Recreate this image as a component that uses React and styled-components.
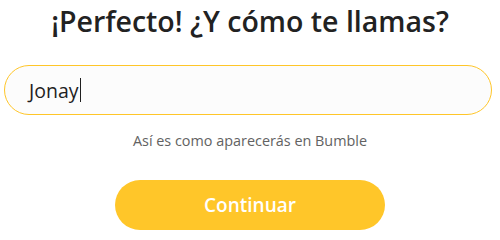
import React from "react";
import styled, { createGlobalStyle } from "styled-components";

const Global = createGlobalStyle`
  html, body { margin: 0; padding: 0; background: #ffffff; }
  body { font-family: "Open Sans", "Noto Sans", sans-serif; }
`;

const Page = styled.div`
  width: 500px;
  height: 238px;
  display: flex;
  flex-direction: column;
  align-items: center;
  box-sizing: border-box;
  padding-top: 1px;
`;

const Title = styled.h1`
  margin: 0;
  font-family: "Open Sans", sans-serif;
  font-weight: 600;
  font-size: 28.5px;
  line-height: 40px;
  color: #222222;
  letter-spacing: 0;
`;

const Field = styled.div`
  margin-top: 24px;
  align-self: flex-start;
  margin-left: 4px;
  width: 488px;
  height: 50px;
  box-sizing: border-box;
  border: 1.5px solid #ffc629;
  border-radius: 25px;
  background: #fcfcfc;
  display: flex;
  align-items: center;
  padding-left: 24px;
`;

const Value = styled.span`
  font-family: "Open Sans", sans-serif;
  font-size: 19.5px;
  color: #1f1f1f;
`;

const Caret = styled.span`
  display: inline-block;
  width: 1px;
  height: 24px;
  background: #1f1f1f;
  margin-left: 1px;
  vertical-align: middle;
`;

const Hint = styled.p`
  margin: 16px 0 0;
  font-family: "Open Sans", sans-serif;
  font-size: 14.4px;
  line-height: 20px;
  color: #626262;
`;

const Button = styled.button`
  margin-top: 29px;
  width: 270px;
  height: 50px;
  border: none;
  border-radius: 25px;
  background: #ffc629;
  color: #ffffff;
  font-family: "Open Sans", sans-serif;
  font-weight: 600;
  font-size: 19px;
  cursor: pointer;
`;

export default function App() {
  return (
    <>
      <Global />
      <Page>
        <Title>¡Perfecto! ¿Y cómo te llamas?</Title>
        <Field>
          <Value>Jonay</Value>
          <Caret />
        </Field>
        <Hint>Así es como aparecerás en Bumble</Hint>
        <Button>Continuar</Button>
      </Page>
    </>
  );
}
